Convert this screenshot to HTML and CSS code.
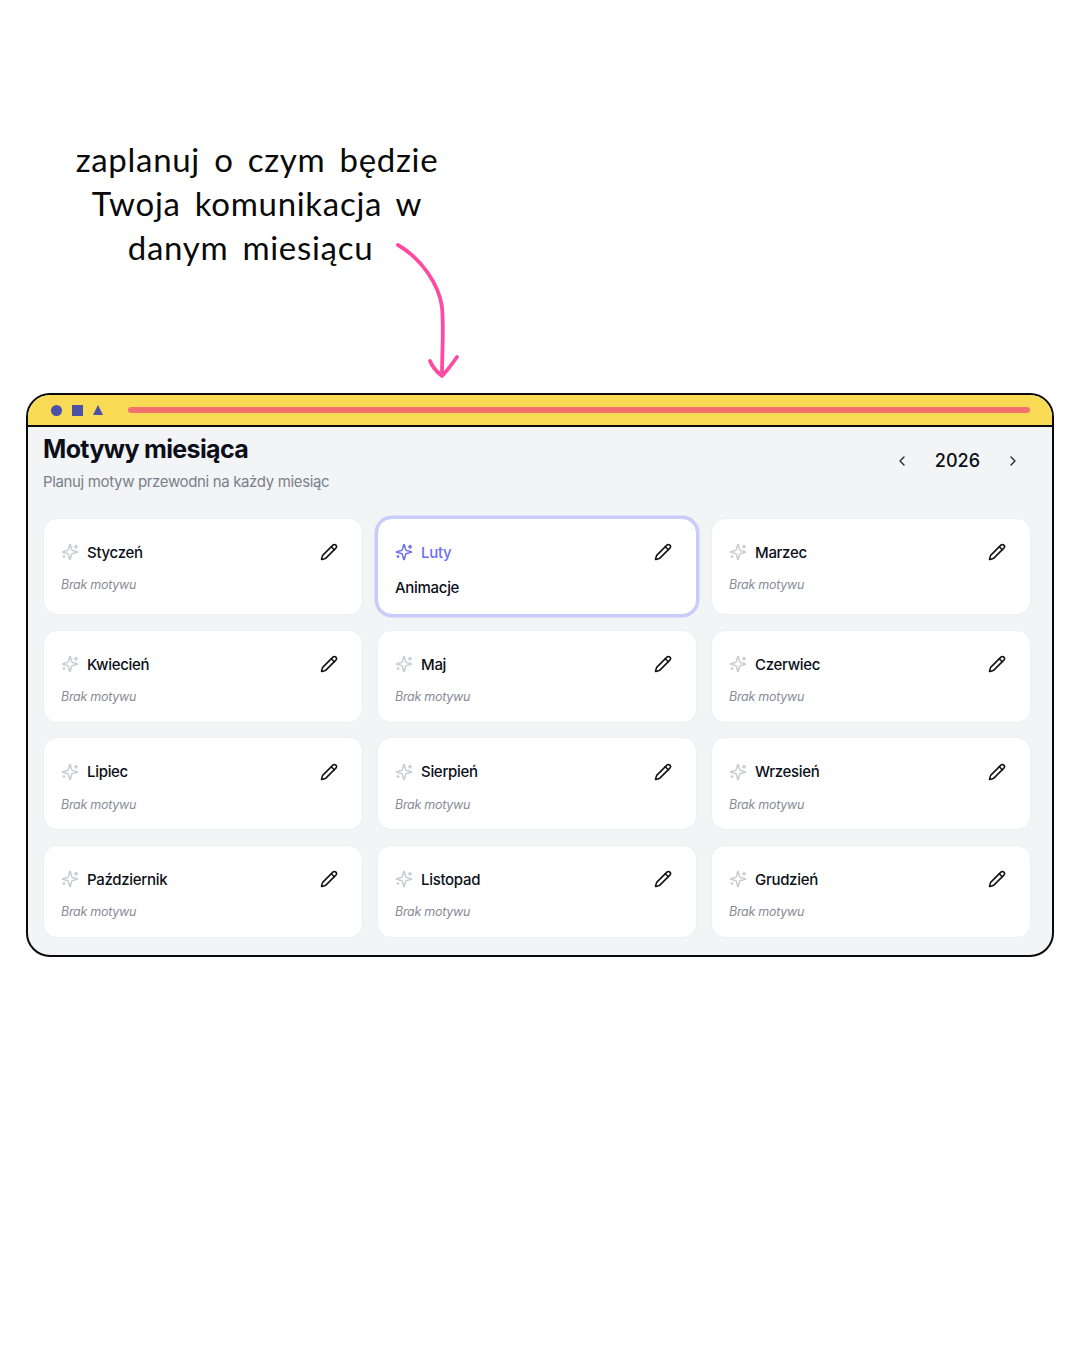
FILE: index.html
```html
<!DOCTYPE html>
<html lang="pl">
<head>
	<meta charset="UTF-8">
	<title>Motywy miesiąca</title>
	<link rel="stylesheet" href="styles.css">
</head>
<body>
	<svg class="defs" width="0" height="0">
		<symbol id="spark" viewBox="0 0 24 24">
			<path d="M9.937 15.5A2 2 0 0 0 8.5 14.063l-6.135-1.582a.5.5 0 0 1 0-.962L8.5 9.936A2 2 0 0 0 9.937 8.5l1.582-6.135a.5.5 0 0 1 .963 0L14.063 8.5A2 2 0 0 0 15.5 9.937l6.135 1.581a.5.5 0 0 1 0 .964L15.5 14.063a2 2 0 0 0-1.437 1.437l-1.582 6.135a.5.5 0 0 1-.963 0z"/>
			<path d="M20 3v4"/><path d="M22 5h-4"/><path d="M4 17v2"/><path d="M5 18H3"/>
		</symbol>
		<symbol id="pencil" viewBox="0 0 24 24">
			<path d="M21.174 6.812a1 1 0 0 0-3.986-3.987L3.842 16.174a2 2 0 0 0-.5.83l-1.321 4.352a.5.5 0 0 0 .623.622l4.353-1.32a2 2 0 0 0 .83-.497z"/>
			<path d="m15 5 4 4"/>
		</symbol>
	</svg>

	<div class="page">
		<p class="note">zaplanuj o czym będzie<br>Twoja komunikacja w<br><span class="last">danym miesiącu</span></p>
		<svg class="arrow" width="70" height="140" viewBox="0 0 70 140">
			<path d="M4 4C28 18 45 44 48 66C50 88 48 112 48 134"/>
			<path d="M36 120C39 127 44 132 48 135C53 130 58 123 63 116"/>
		</svg>

		<div class="window">
			<div class="bar">
				<div class="shapes">
					<span class="circle"></span>
					<span class="square"></span>
					<span class="triangle"></span>
				</div>
				<div class="line"></div>
			</div>
			<div class="content">
				<div class="head">
					<div>
						<h1>Motywy miesiąca</h1>
						<p class="sub">Planuj motyw przewodni na każdy miesiąc</p>
					</div>
					<div class="year">
						<svg class="chev" viewBox="0 0 24 24"><path d="m15 18-6-6 6-6"/></svg>
						<span>2026</span>
						<svg class="chev" viewBox="0 0 24 24"><path d="m9 18 6-6-6-6"/></svg>
					</div>
				</div>

				<div class="months">
					<div class="card">
						<div class="top"><svg class="spark"><use href="#spark"/></svg><span class="name">Styczeń</span><svg class="pencil"><use href="#pencil"/></svg></div>
						<p class="empty">Brak motywu</p>
					</div>
					<div class="card active">
						<div class="top"><svg class="spark"><use href="#spark"/></svg><span class="name">Luty</span><svg class="pencil"><use href="#pencil"/></svg></div>
						<p class="theme">Animacje</p>
					</div>
					<div class="card">
						<div class="top"><svg class="spark"><use href="#spark"/></svg><span class="name">Marzec</span><svg class="pencil"><use href="#pencil"/></svg></div>
						<p class="empty">Brak motywu</p>
					</div>
					<div class="card">
						<div class="top"><svg class="spark"><use href="#spark"/></svg><span class="name">Kwiecień</span><svg class="pencil"><use href="#pencil"/></svg></div>
						<p class="empty">Brak motywu</p>
					</div>
					<div class="card">
						<div class="top"><svg class="spark"><use href="#spark"/></svg><span class="name">Maj</span><svg class="pencil"><use href="#pencil"/></svg></div>
						<p class="empty">Brak motywu</p>
					</div>
					<div class="card">
						<div class="top"><svg class="spark"><use href="#spark"/></svg><span class="name">Czerwiec</span><svg class="pencil"><use href="#pencil"/></svg></div>
						<p class="empty">Brak motywu</p>
					</div>
					<div class="card">
						<div class="top"><svg class="spark"><use href="#spark"/></svg><span class="name">Lipiec</span><svg class="pencil"><use href="#pencil"/></svg></div>
						<p class="empty">Brak motywu</p>
					</div>
					<div class="card">
						<div class="top"><svg class="spark"><use href="#spark"/></svg><span class="name">Sierpień</span><svg class="pencil"><use href="#pencil"/></svg></div>
						<p class="empty">Brak motywu</p>
					</div>
					<div class="card">
						<div class="top"><svg class="spark"><use href="#spark"/></svg><span class="name">Wrzesień</span><svg class="pencil"><use href="#pencil"/></svg></div>
						<p class="empty">Brak motywu</p>
					</div>
					<div class="card">
						<div class="top"><svg class="spark"><use href="#spark"/></svg><span class="name">Październik</span><svg class="pencil"><use href="#pencil"/></svg></div>
						<p class="empty">Brak motywu</p>
					</div>
					<div class="card">
						<div class="top"><svg class="spark"><use href="#spark"/></svg><span class="name">Listopad</span><svg class="pencil"><use href="#pencil"/></svg></div>
						<p class="empty">Brak motywu</p>
					</div>
					<div class="card">
						<div class="top"><svg class="spark"><use href="#spark"/></svg><span class="name">Grudzień</span><svg class="pencil"><use href="#pencil"/></svg></div>
						<p class="empty">Brak motywu</p>
					</div>
				</div>
			</div>
		</div>
	</div>
</body>
</html>
```

FILE: styles.css
```css
*{
	margin: 0;
	padding: 0;
	box-sizing: border-box;
}
html,body{
	height: 1350px;
	background: #fff;
	overflow: hidden;
}
body{
	font-family: Inter, "Noto Sans", sans-serif;
	color: #0b0f19;
}
.defs{
	position: absolute;
}
.page{
	position: relative;
	height: 1350px;
	padding: 137px 26px 0;
}
.note{
	width: 462px;
	height: 256px;
	font-family: Lato, sans-serif;
	font-size: 33px;
	line-height: 44px;
	letter-spacing: 0.7px;
	word-spacing: 5px;
	text-align: center;
	color: #0a0a0a;
}
.last{
	display: inline-block;
	margin-right: 13px;
}
.arrow{
	position: absolute;
	left: 394px;
	top: 241px;
	fill: none;
	stroke: #ff4aa2;
	stroke-width: 3.8;
	stroke-linecap: round;
	stroke-linejoin: round;
}
.window{
	width: 1028px;
	height: 564px;
	border: 2px solid #0a0a0a;
	border-radius: 24px;
	background: #f3f4f6;
	overflow: hidden;
}
.bar{
	display: flex;
	align-items: center;
	height: 32px;
	padding: 0 22px 0 23px;
	background: #f9da55;
	border-bottom: 2px solid #0a0a0a;
}
.shapes{
	display: flex;
	align-items: center;
	gap: 10px;
	margin-right: 25px;
}
.circle{
	width: 11px;
	height: 11px;
	border-radius: 50%;
	background: #4a52a8;
}
.square{
	width: 11px;
	height: 11px;
	background: #4a52a8;
}
.triangle{
	width: 0;
	height: 0;
	border-left: 5.5px solid transparent;
	border-right: 5.5px solid transparent;
	border-bottom: 10px solid #4a52a8;
}
.line{
	flex: 1;
	height: 6px;
	border-radius: 3px;
	background: #f4706f;
}
.content{
	padding: 6px 22px 0 15px;
}
.head{
	display: flex;
	justify-content: space-between;
	align-items: flex-start;
	height: 84.5px;
}
h1{
	font-size: 25px;
	line-height: 32px;
	font-weight: 700;
	letter-spacing: -0.65px;
}
.sub{
	margin-top: 7px;
	font-size: 15px;
	line-height: 20px;
	letter-spacing: -0.35px;
	color: #7a808a;
}
.year{
	display: flex;
	align-items: center;
	gap: 25px;
	margin: 16px 9px 0 0;
	font-size: 18px;
	line-height: 24px;
	font-weight: 500;
}
.chev{
	width: 16px;
	height: 16px;
	fill: none;
	stroke: #1f2937;
	stroke-width: 2;
	stroke-linecap: round;
	stroke-linejoin: round;
}
.months{
	display: grid;
	grid-template-columns: repeat(3, 320px);
	grid-template-rows: 97.5px;
	grid-auto-rows: 93px;
	column-gap: 14px;
	row-gap: 14.5px;
}
.card{
	padding: 21.5px 17px 0;
	background: #fff;
	border: 1px solid #eceef1;
	border-radius: 14px;
}
.top{
	display: flex;
	align-items: center;
	height: 24px;
}
.spark{
	flex: none;
	width: 18px;
	height: 18px;
	margin-right: 8px;
	fill: none;
	stroke: #c9ccd2;
	stroke-width: 2;
	stroke-linecap: round;
	stroke-linejoin: round;
}
.pencil{
	flex: none;
	width: 18px;
	height: 18px;
	margin-left: auto;
	margin-right: 7px;
	fill: none;
	stroke: #111;
	stroke-width: 2;
	stroke-linecap: round;
	stroke-linejoin: round;
}
.name{
	font-size: 15px;
	font-weight: 500;
	letter-spacing: -0.3px;
}
.empty{
	margin-top: 12px;
	font-size: 12.5px;
	line-height: 18px;
	font-style: italic;
	letter-spacing: -0.28px;
	color: #878c96;
}
.theme{
	margin-top: 14px;
	font-size: 15px;
	line-height: 20px;
	font-weight: 500;
	letter-spacing: -0.3px;
}
.active{
	border-color: #c9cbfa;
	border-radius: 15px;
	box-shadow: 0 0 0 2.5px #c9cbfa;
}
.active .spark{
	stroke: #6c6ff2;
}
.active .name{
	color: #6c6ff2;
}
```
